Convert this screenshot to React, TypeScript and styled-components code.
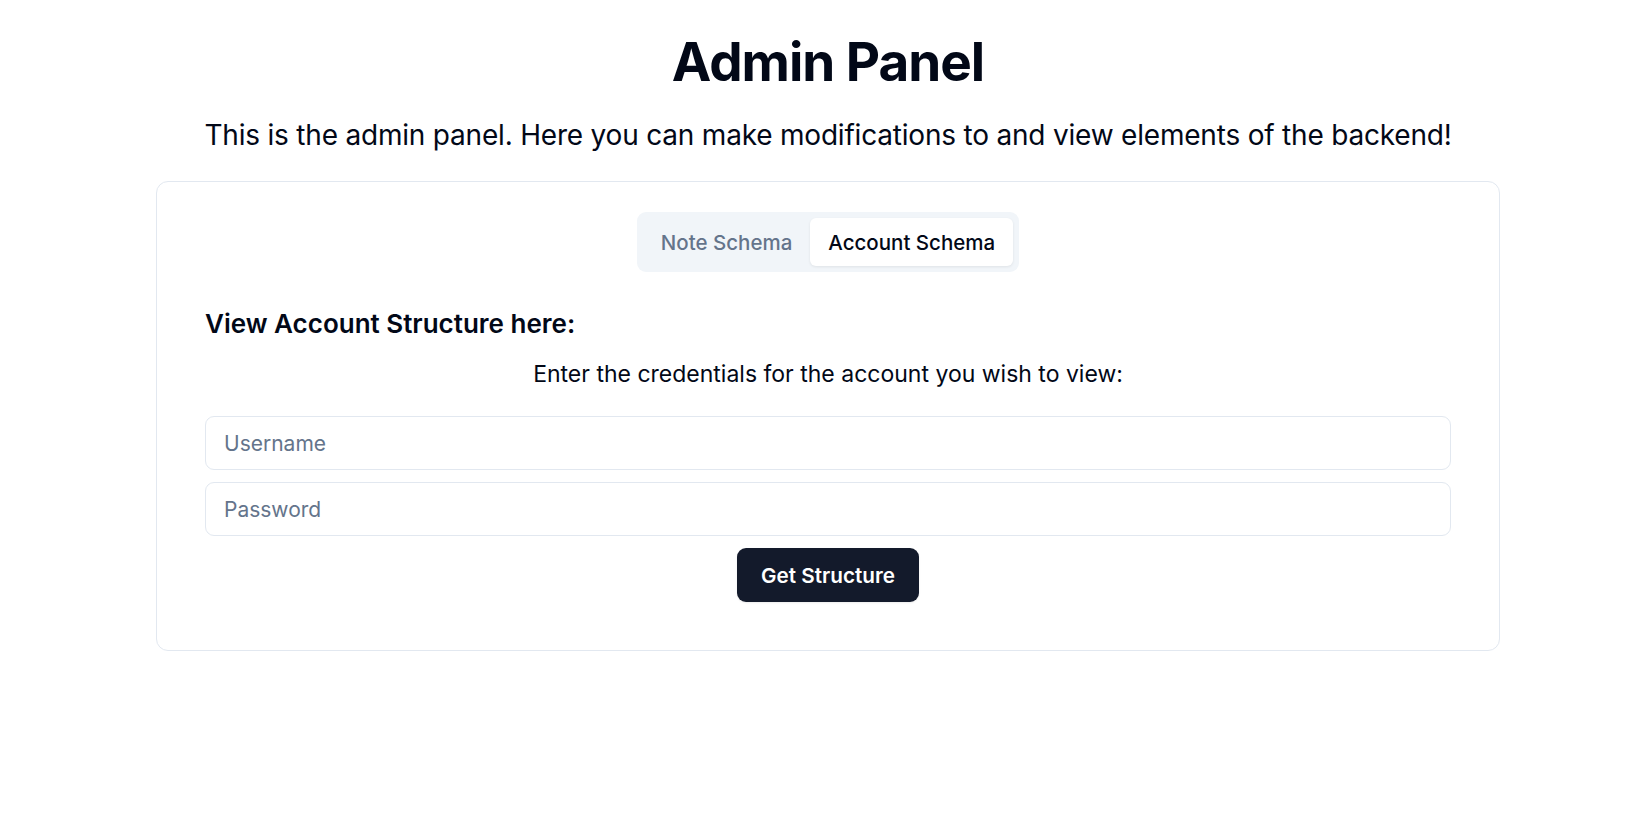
import React from "react";
import styled, { createGlobalStyle } from "styled-components";

const GlobalStyle = createGlobalStyle`
  * { box-sizing: border-box; }
  html, body { margin: 0; padding: 0; background: #ffffff; }
  body {
    font-family: Inter, "Noto Sans", "Liberation Sans", sans-serif;
    color: #020817;
    -webkit-font-smoothing: antialiased;
  }
`;

const Page = styled.main`
  display: flex;
  flex-direction: column;
  align-items: center;
  padding: 32px 0 0 10px;
  width: 100%;
`;

const Title = styled.h1`
  margin: 0;
  font-size: 53px;
  line-height: 60px;
  font-weight: 700;
  letter-spacing: -1px;
  color: #020817;
`;

const Subtitle = styled.p`
  margin: 21px 0 0;
  font-size: 28px;
  line-height: 45px;
  font-weight: 400;
  letter-spacing: -0.2px;
  color: #020817;
`;

const Card = styled.section`
  margin-top: 23px;
  width: 1344px;
  border: 1px solid #e2e8f0;
  border-radius: 12px;
  background: #ffffff;
  padding: 30px 48px 48px;
  display: flex;
  flex-direction: column;
`;

const TabList = styled.div`
  align-self: center;
  display: flex;
  align-items: center;
  height: 60px;
  padding: 6px;
  background: #f1f5f9;
  border-radius: 9px;
`;

const TabButton = styled.button<{ $active?: boolean }>`
  height: 48px;
  padding: 0 18px;
  border: none;
  border-radius: 6px;
  font-family: inherit;
  font-size: 20.5px;
  font-weight: 500;
  cursor: pointer;
  background: ${(p) => (p.$active ? "#ffffff" : "transparent")};
  color: ${(p) => (p.$active ? "#020817" : "#64748b")};
  box-shadow: ${(p) => (p.$active ? "0 1px 3px rgba(0,0,0,0.08)" : "none")};
`;

const SectionHeading = styled.h2`
  margin: 36px 0 0;
  font-size: 26px;
  line-height: 32px;
  font-weight: 600;
  color: #020817;
`;

const Prompt = styled.p`
  margin: 16px 0 0;
  text-align: center;
  font-size: 23px;
  line-height: 36px;
  color: #020817;
`;

const Form = styled.form`
  margin-top: 24px;
  display: flex;
  flex-direction: column;
  gap: 12px;
`;

const Field = styled.input`
  width: 100%;
  height: 54px;
  padding: 0 18px;
  border: 1px solid #e2e8f0;
  border-radius: 9px;
  font-family: inherit;
  font-size: 21px;
  color: #020817;
  background: #ffffff;
  outline: none;
  &::placeholder { color: #64748b; }
`;

const SubmitButton = styled.button`
  align-self: center;
  height: 54px;
  padding: 0 24px;
  border: none;
  border-radius: 9px;
  background: #131a2b;
  color: #ffffff;
  font-family: inherit;
  font-size: 20.7px;
  font-weight: 600;
  cursor: pointer;
  box-shadow: 0 1px 2px rgba(0,0,0,0.08);
`;

export default function App() {
  return (
    <>
      <GlobalStyle />
      <Page>
        <Title>Admin Panel</Title>
        <Subtitle>
          This is the admin panel. Here you can make modifications to and view elements of the backend!
        </Subtitle>
        <Card>
          <TabList>
            <TabButton type="button">Note Schema</TabButton>
            <TabButton type="button" $active>Account Schema</TabButton>
          </TabList>
          <SectionHeading>View Account Structure here:</SectionHeading>
          <Prompt>Enter the credentials for the account you wish to view:</Prompt>
          <Form onSubmit={(e) => e.preventDefault()}>
            <Field type="text" placeholder="Username" />
            <Field type="password" placeholder="Password" />
            <SubmitButton type="submit">Get Structure</SubmitButton>
          </Form>
        </Card>
      </Page>
    </>
  );
}
